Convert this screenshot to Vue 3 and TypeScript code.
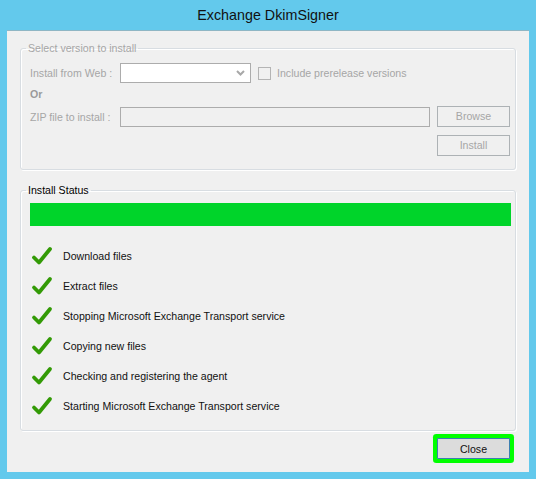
<script setup lang="ts">
const steps: string[] = [
  'Download files',
  'Extract files',
  'Stopping Microsoft Exchange Transport service',
  'Copying new files',
  'Checking and registering the agent',
  'Starting Microsoft Exchange Transport service'
];
</script>

<template>
  <div class="window">
    <div class="title">Exchange DkimSigner</div>
    <div class="client">
      <fieldset class="group disabled">
        <legend>Select version to install</legend>
        <div class="row web">
          <span class="label">Install from Web :</span>
          <div class="combo">
            <svg width="9" height="6" viewBox="0 0 9 6"><path d="M1 1l3.5 3.5L8 1" fill="none" stroke="#a8a8a8" stroke-width="2" /></svg>
          </div>
          <span class="check"></span>
          <span class="check-label">Include prerelease versions</span>
        </div>
        <div class="or">Or</div>
        <div class="row zip">
          <span class="label">ZIP file to install :</span>
          <div class="input"></div>
          <div class="btn">Browse</div>
        </div>
        <div class="row end">
          <div class="btn">Install</div>
        </div>
      </fieldset>

      <fieldset class="group status">
        <legend>Install Status</legend>
        <div class="progress"></div>
        <ul class="steps">
          <li v-for="step in steps" :key="step">
            <svg width="22" height="20" viewBox="0 0 22 20"><path d="M3 11.5l5 5L19 3" fill="none" stroke="#339a06" stroke-width="3.8" stroke-linecap="round" stroke-linejoin="round" /></svg>
            <span>{{ step }}</span>
          </li>
        </ul>
      </fieldset>

      <div class="footer">
        <button class="close">Close</button>
      </div>
    </div>
  </div>
</template>

<style scoped>
.window {
  width: 536px;
  height: 479px;
  box-sizing: border-box;
  background: #63c9ec;
  padding: 0 7px 7px;
  display: flex;
  flex-direction: column;
  font-family: 'Liberation Sans', Arial, sans-serif;
  font-size: 10.6px;
  color: #000;
}

.title {
  height: 30px;
  line-height: 30px;
  text-align: center;
  font-size: 14.3px;
  color: #111;
}

.client {
  flex: 1;
  background: #f0f0f0;
  border-top: 1px solid #8fb6c4;
  box-sizing: border-box;
  padding: 10px 13px 0;
  display: flex;
  flex-direction: column;
}

.group {
  margin: 0;
  border: 1px solid #d8dde2;
  border-radius: 3px;
  padding: 0 5px 0 9px;
  min-width: 0;
  box-shadow: inset 1px 1px 0 #fff, 1px 1px 0 #fff;
}

.group legend {
  padding: 0 2px;
  margin-left: -4px;
  line-height: 14px;
}

.disabled {
  height: 129px;
  box-sizing: border-box;
  color: #a6a6a6;
}

.row {
  display: flex;
  align-items: center;
}

.web {
  margin-top: 8px;
  height: 20px;
}

.label {
  width: 90px;
  flex: none;
}

.combo {
  width: 131px;
  height: 20px;
  box-sizing: border-box;
  background: #fff;
  border: 1px solid #acacac;
  display: flex;
  align-items: center;
  justify-content: flex-end;
  padding-right: 5px;
}

.check {
  width: 13px;
  height: 13px;
  box-sizing: border-box;
  margin-left: 7px;
  border: 1px solid #b4b4b4;
  background: #f0f0f0;
}

.check-label {
  margin-left: 6px;
}

.or {
  margin-top: 1px;
  line-height: 20px;
  font-weight: bold;
  color: #9a9a9a;
}

.zip {
  margin-top: 2px;
  height: 21px;
}

.input {
  width: 310px;
  height: 20px;
  box-sizing: border-box;
  border: 1px solid #acacac;
  background: #f0f0f0;
}

.btn {
  width: 73px;
  height: 21px;
  box-sizing: border-box;
  border: 1px solid #adb2b5;
  line-height: 19px;
  text-align: center;
  background: #f0f0f0;
}

.zip .btn {
  margin-left: 7px;
}

.end {
  justify-content: flex-end;
  margin-top: 8px;
}

.status {
  margin-top: 13px;
  height: 248px;
  box-sizing: border-box;
  padding: 0 4px 0 9px;
}

.progress {
  height: 23px;
  margin-top: 6px;
  background: #00d42a;
}

.steps {
  list-style: none;
  margin: 15px 0 0;
  padding: 0;
  color: #111;
}

.steps li {
  height: 30px;
  display: flex;
  align-items: center;
  gap: 10px;
  padding-left: 1px;
}

.footer {
  margin-top: 7px;
  display: flex;
  justify-content: flex-end;
  padding-right: 6px;
}

.close {
  width: 73px;
  height: 21px;
  box-sizing: border-box;
  padding: 0;
  border: 1px solid #3c7fb1;
  border-radius: 1px;
  box-shadow: 0 0 0 4px #00ff00;
  background: #dcdcdc;
  color: #111;
  font: inherit;
}
</style>

<style>
html, body {
  margin: 0;
  overflow: hidden;
}
</style>
